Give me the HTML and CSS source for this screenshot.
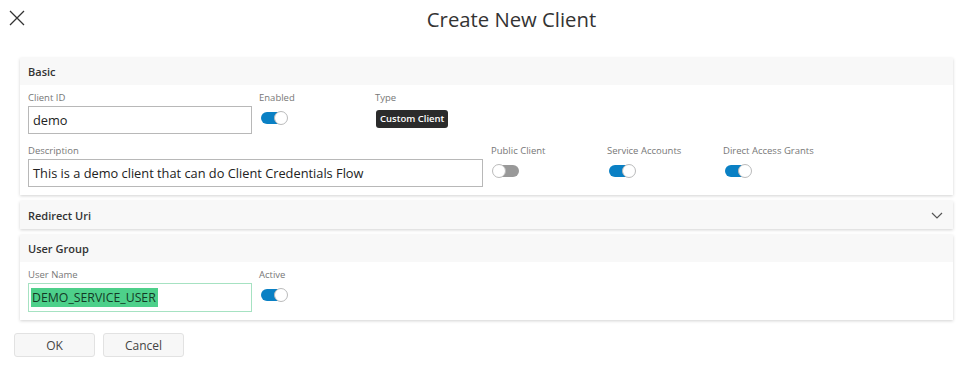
FILE: index.html
```html
<!DOCTYPE html>
<html>
<head>
<title>Create New Client</title>
<link rel="stylesheet" href="styles.css">
</head>
<body>

<div class="dialog">
  <div class="dialog-header">
    <div class="close">
      <svg width="16" height="16" viewBox="0 0 16 16"><path d="M1 1 L15 15 M15 1 L1 15" stroke="#333" stroke-width="1.3" fill="none"/></svg>
    </div>
    <h1 class="title">Create New Client</h1>
  </div>

  <div class="panels">
    <!-- Basic -->
    <div class="panel">
      <div class="panel-header">Basic</div>
      <div class="panel-body">
        <div class="row">
          <div class="field w-short">
            <label>Client ID</label>
            <div class="text-box">demo</div>
          </div>
          <div class="field w-toggle">
            <label>Enabled</label>
            <div class="toggle on"><span class="knob"></span></div>
          </div>
          <div class="field">
            <label>Type</label>
            <div class="badge">Custom Client</div>
          </div>
        </div>
        <div class="row">
          <div class="field w-long">
            <label>Description</label>
            <div class="text-box">This is a demo client that can do Client Credentials Flow</div>
          </div>
          <div class="field w-toggle">
            <label>Public Client</label>
            <div class="toggle"><span class="knob"></span></div>
          </div>
          <div class="field w-toggle">
            <label>Service Accounts</label>
            <div class="toggle on"><span class="knob"></span></div>
          </div>
          <div class="field w-toggle">
            <label>Direct Access Grants</label>
            <div class="toggle on"><span class="knob"></span></div>
          </div>
        </div>
      </div>
    </div>

    <!-- Redirect Uri (collapsed) -->
    <div class="panel">
      <div class="panel-header collapsed">
        <span>Redirect Uri</span>
        <svg class="chevron" width="12" height="8" viewBox="0 0 12 8"><path d="M1 1 L6 6 L11 1" stroke="#555" stroke-width="1.2" fill="none"/></svg>
      </div>
    </div>

    <!-- User Group -->
    <div class="panel">
      <div class="panel-header">User Group</div>
      <div class="panel-body">
        <div class="row">
          <div class="field w-short">
            <label>User Name</label>
            <div class="text-box focused"><span class="selected">DEMO_SERVICE_USER</span></div>
          </div>
          <div class="field w-toggle">
            <label>Active</label>
            <div class="toggle on"><span class="knob"></span></div>
          </div>
        </div>
      </div>
    </div>
  </div>

  <div class="buttons">
    <button class="btn">OK</button>
    <button class="btn">Cancel</button>
  </div>
</div>

</body>
</html>
```

FILE: styles.css
```css
/* Reset */
* {
  margin: 0;
  padding: 0;
  box-sizing: border-box;
}

body {
  font-family: 'Open Sans', 'Liberation Sans', sans-serif;
  background-color: #fff;
  color: #333;
}

/* Header with close button and title */
.dialog-header {
  display: flex;
  align-items: flex-start;
  height: 58px;
  padding: 9px 0 0 9px;
}

.close {
  width: 16px;
  height: 16px;
  cursor: pointer;
}

.title {
  flex: 1;
  text-align: center;
  font-size: 20.3px;
  font-weight: 400;
  line-height: 20px;
  color: #333;
  padding-left: 42px;
}

/* Panels */
.panels {
  display: flex;
  flex-direction: column;
  gap: 6px;
  padding: 0 3px 0 20px;
}

.panel {
  background-color: #fff;
  box-shadow: 0 1px 3px rgba(0, 0, 0, 0.18);
}

.panel-header {
  display: flex;
  align-items: center;
  justify-content: space-between;
  height: 27px;
  padding: 0 10px 0 8px;
  background-color: #f8f8f8;
  font-size: 11px;
  font-weight: 600;
  color: #333;
}

.panel-header.collapsed {
  height: 28px;
}

.chevron {
  margin-top: 1px;
}

.panel-body {
  padding: 6px 8px 8px 8px;
}

.row {
  display: flex;
}

.row + .row {
  margin-top: 10px;
}

.field {
  display: flex;
  flex-direction: column;
}

.w-short {
  width: 231px;
}

.w-long {
  width: 463px;
}

.w-toggle {
  width: 116px;
}

label {
  display: block;
  height: 15px;
  font-size: 9.5px;
  line-height: 14px;
  color: #777;
}

/* Text inputs */
.text-box {
  width: 224px;
  height: 28px;
  border: 1px solid #b8b8b8;
  padding: 0 4px;
  font-size: 12.8px;
  line-height: 26px;
  color: #222;
  white-space: nowrap;
}

.w-long .text-box {
  width: 455px;
}

.text-box.focused {
  height: 29px;
  border-color: #a6e2c2;
  padding: 0 2px;
}

.selected {
  display: inline-block;
  background-color: #4dd08a;
  color: #143a26;
  font-size: 12.3px;
  padding: 0 2px 0 1px;
  line-height: 19px;
  margin-top: 3px;
}

/* Toggle switches */
.toggle {
  position: relative;
  width: 26px;
  height: 12px;
  margin-top: 6px;
  margin-left: 2px;
  border-radius: 6px;
  background-color: #999;
}

.toggle.on {
  background-color: #0a80c4;
}

.knob {
  position: absolute;
  top: -1px;
  left: -1px;
  width: 14px;
  height: 14px;
  border-radius: 50%;
  background-color: #fff;
  border: 1px solid #bbb;
}

.toggle.on .knob {
  left: auto;
  right: -1px;
}

/* Badge */
.badge {
  display: inline-block;
  align-self: flex-start;
  margin-top: 4px;
  margin-left: 1px;
  height: 18px;
  padding: 0 4px;
  border-radius: 3px;
  background-color: #2b2b2b;
  color: #fff;
  font-size: 9.5px;
  font-weight: 600;
  line-height: 18px;
}

/* Buttons */
.buttons {
  display: flex;
  gap: 8px;
  padding: 13px 0 0 14px;
}

.btn {
  width: 81px;
  height: 24px;
  border: 1px solid #e2e2e2;
  border-radius: 3px;
  background-color: #f7f7f7;
  font-family: 'Open Sans', 'Liberation Sans', sans-serif;
  font-size: 12px;
  color: #444;
  cursor: pointer;
}
```
